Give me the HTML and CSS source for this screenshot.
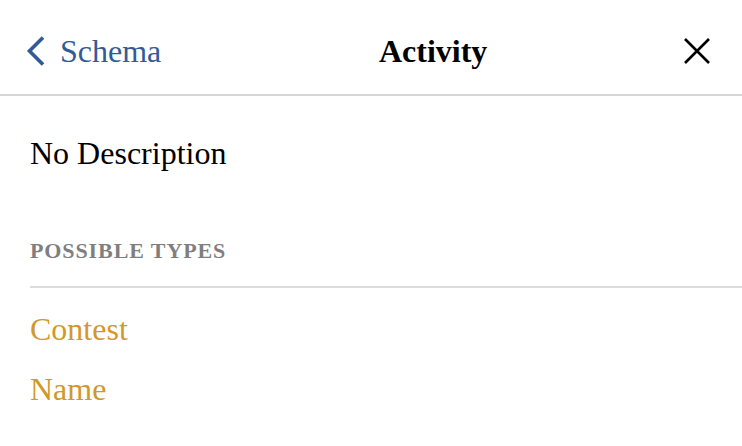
FILE: index.html
```html
<!DOCTYPE html>
<html lang="en">
<head>
<meta charset="utf-8">
<title>Activity</title>
<link rel="stylesheet" href="styles.css">
</head>
<body>
<div class="explorer">
  <header class="title-bar">
    <a class="back" href="#">
      <svg class="chevron" width="20" height="32" viewBox="0 0 20 32" aria-hidden="true">
        <polyline points="17,2.5 3.5,16 17,29.5" fill="none" stroke="currentColor" stroke-width="3.6"/>
      </svg>
      <span class="back-label">Schema</span>
    </a>
    <div class="title">Activity</div>
    <button class="close" aria-label="Close">
      <svg width="28" height="28" viewBox="0 0 28 28" aria-hidden="true">
        <path d="M2 2 L26 26 M26 2 L2 26" fill="none" stroke="currentColor" stroke-width="2.6"/>
      </svg>
    </button>
  </header>
  <main class="contents">
    <p class="description">No Description</p>
    <section class="category">
      <div class="category-title">Possible Types</div>
      <ul class="type-list">
        <li><a class="type-name" href="#">Contest</a></li>
        <li><a class="type-name" href="#">Name</a></li>
      </ul>
    </section>
  </main>
</div>
</body>
</html>
```

FILE: styles.css
```css
html, body {
  margin: 0;
  padding: 0;
  background: #ffffff;
}

body {
  font-family: "Liberation Serif", "Times New Roman", serif;
  font-size: 32px;
  line-height: 36px;
  color: #000000;
}

.title-bar {
  display: flex;
  align-items: center;
  height: 96px;
  box-sizing: border-box;
  padding: 8px 31px 0 26px;
  border-bottom: 2px solid #d6d6d6;
}

.back {
  display: flex;
  align-items: center;
  gap: 14px;
  color: #335a98;
  text-decoration: none;
}

.chevron {
  display: block;
  margin-top: -1px;
}

.title {
  flex: 1;
  text-align: center;
  font-weight: bold;
  padding-left: 22px;
}

.close {
  display: flex;
  padding: 0;
  margin: 0;
  border: 0;
  background: none;
  color: #000000;
  cursor: pointer;
}

.close svg {
  display: block;
}

.contents {
  padding: 39px 0 0 30px;
}

.description {
  margin: 0;
}

.category {
  margin-top: 67px;
}

.category-title {
  font-size: 22px;
  line-height: 26px;
  font-weight: bold;
  text-transform: uppercase;
  letter-spacing: 0.9px;
  color: #7f7f7f;
  padding-bottom: 22px;
  border-bottom: 2px solid #dcdcdc;
}

.type-list {
  list-style: none;
  margin: 0;
  padding: 23px 0 0 0;
  display: flex;
  flex-direction: column;
  gap: 24px;
}

.type-name {
  color: #d1982b;
  text-decoration: none;
}
```
